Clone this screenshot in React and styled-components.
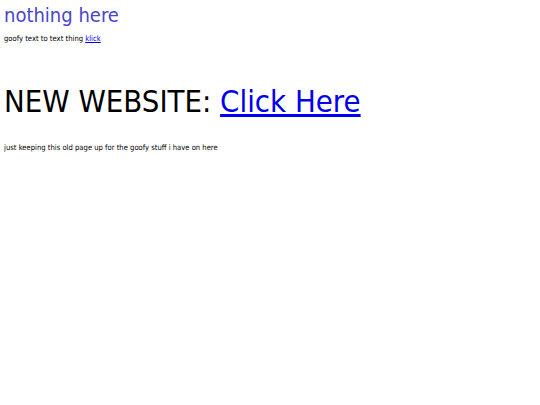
import React from 'react'
import styled, { createGlobalStyle } from 'styled-components'

const GlobalStyle = createGlobalStyle`
    body {
        margin: 4px;
        background: #fff;
        font-family: "DejaVu Sans Condensed", "DejaVu Sans", Tahoma, sans-serif;
        font-stretch: condensed;
        color: #000;
    }
`

const Title = styled.h1`
    margin: 0;
    font-size: 20px;
    font-weight: normal;
    color: #4b45c9;
    line-height: 22px;
`

const Small = styled.p`
    margin: ${props => props.top || 0}px 0 0;
    font-size: 7.6px;
    line-height: 10px;
`

const Link = styled.a`
    color: #0000ee;
`

const Big = styled.h2`
    margin: 39px 0 0;
    font-size: 30.8px;
    font-weight: normal;
    line-height: 36px;
`

const App = () => (
    <>
        <GlobalStyle />
        <Title>nothing here</Title>
        <Small top={8}>goofy text to text thing <Link href="#">klick</Link></Small>
        <Big>NEW WEBSITE: <Link href="#">Click Here</Link></Big>
        <Small top={24}>just keeping this old page up for the goofy stuff i have on here</Small>
    </>
)

export default App
